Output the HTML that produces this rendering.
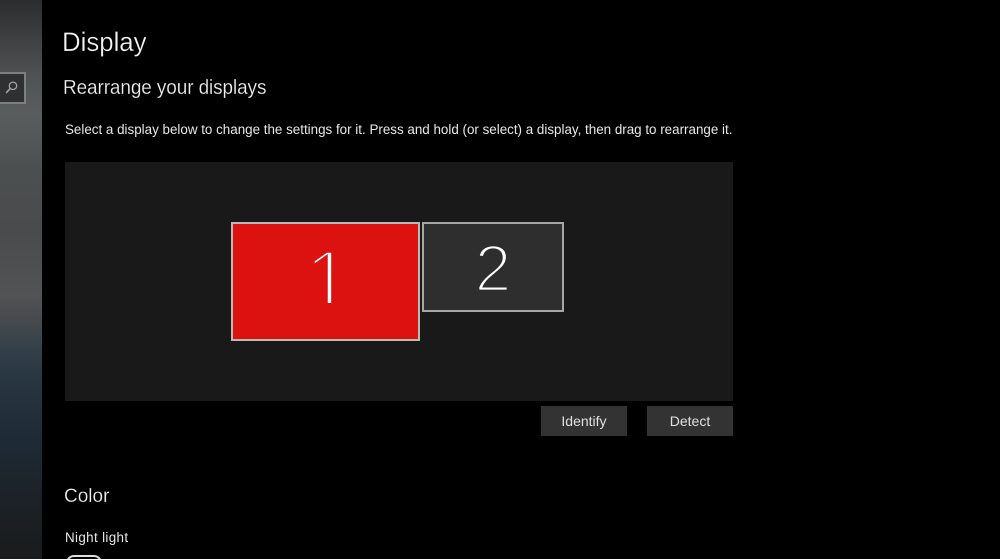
<!DOCTYPE html>
<html lang="en">
<head>
<meta charset="utf-8">
<title>Display</title>
<style>
html,body{margin:0;padding:0;width:1000px;height:559px;overflow:hidden;background:#000}
body{position:relative;font-family:"Liberation Sans",sans-serif;color:#fff}
.a{position:absolute;white-space:nowrap}
#side{left:0;top:0;width:41.5px;height:559px;background:linear-gradient(180deg,#2a2c2e 0,#3c3e40 35px,#4f5253 75px,#5a5d5e 115px,#4c4f50 170px,#494b4c 230px,#525354 295px,#464a4e 320px,#36414a 345px,#293743 375px,#1f2c38 430px,#1c2329 490px,#1a1b1c 559px)}
#search{left:-4px;top:72px;width:26px;height:28px;border:2px solid #7d8081;background:#2e3031}
.mon{position:absolute;box-sizing:border-box;border:2px solid #b9b9b9}
.btn{position:absolute;top:406px;width:86px;height:30px;background:#333;color:#e0e0e0;font-size:14px;line-height:30px;text-align:center;filter:blur(.25px)}
.t{filter:blur(.25px);transform-origin:left top}
</style>
</head>
<body>
<div class="a" id="side"></div>
<div class="a" id="search"></div>
<svg class="a" style="left:4px;top:80px" width="16" height="16" viewBox="0 0 16 16" fill="none" stroke="#a2a4a5" stroke-width="1.3"><circle cx="9" cy="5.8" r="3.7"/><path d="M6.2 8.5 2.6 12.4" stroke-width="1.6" stroke-linecap="round"/></svg>

<div class="a t" style="left:62px;top:26px;font-size:27px;line-height:32px;color:#f2f2f2;-webkit-text-stroke:.3px #000;transform:scaleX(.955)">Display</div>
<div class="a t" style="left:63px;top:76px;font-size:20px;line-height:24px;letter-spacing:-.1px;color:#f0f0f0;-webkit-text-stroke:.2px #000;transform:scaleX(.948)">Rearrange your displays</div>
<div class="a t" style="left:65px;top:121px;font-size:13.4px;line-height:17px;color:#e8e8e8">Select a display below to change the settings for it. Press and hold (or select) a display, then drag to rearrange it.</div>

<div class="a" style="left:65px;top:162px;width:668px;height:239px;background:#191919"></div>

<div class="mon" style="left:231px;top:222px;width:189px;height:119px;background:#dc1210"></div>
<div class="mon" style="left:422px;top:222px;width:142px;height:90px;background:#2e2e2e;border-color:#a6a6a6"></div>
<div class="a" style="left:303px;top:238px;width:50px;height:65px;overflow:hidden;text-align:center;font-size:84px;line-height:84px;color:#fff;-webkit-text-stroke:4px #dc1210">1</div>
<div class="a" style="left:473px;top:235px;width:40px;text-align:center;font-size:66px;line-height:66px;color:#fff;-webkit-text-stroke:2.8px #2e2e2e">2</div>

<div class="btn" style="left:541px">Identify</div>
<div class="btn" style="left:647px">Detect</div>

<div class="a t" style="left:64px;top:485px;font-size:19px;line-height:23px;color:#f0f0f0;-webkit-text-stroke:.2px #000">Color</div>
<div class="a t" style="left:65px;top:529px;font-size:13.4px;line-height:17px;letter-spacing:.35px;color:#e8e8e8">Night light</div>
<div class="a" style="left:66px;top:555px;width:36px;height:16px;box-sizing:border-box;border:2px solid #dcdcdc;border-radius:10px"></div>
</body>
</html>
